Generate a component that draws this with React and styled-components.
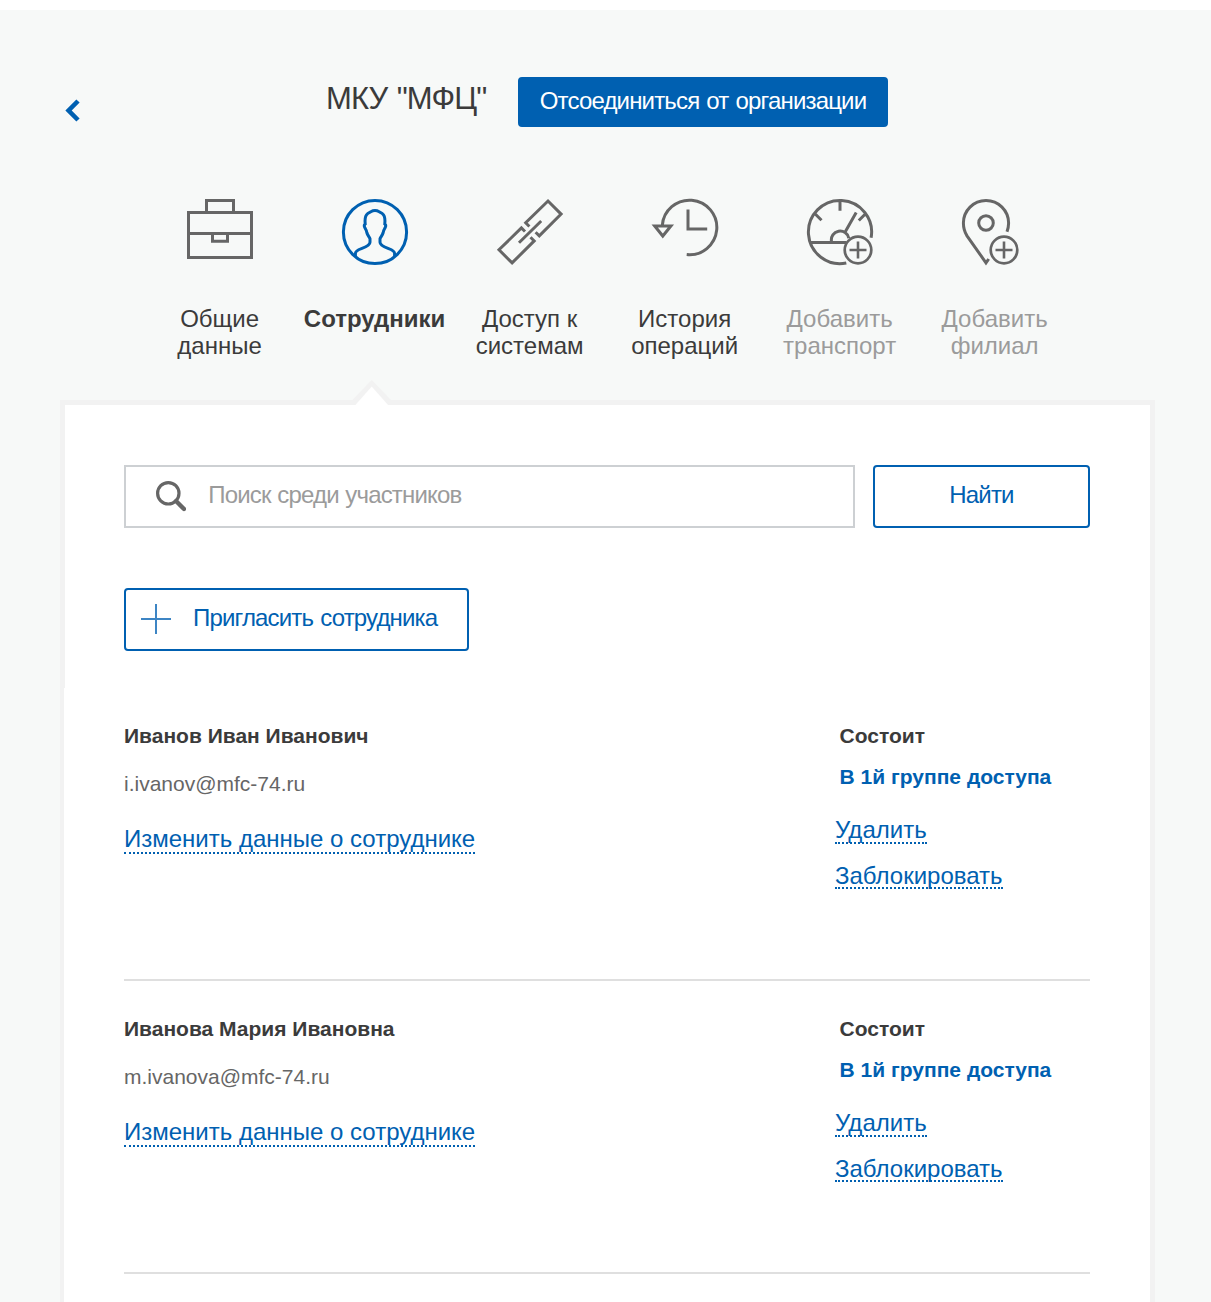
import React from "react";
import styled, { createGlobalStyle } from "styled-components";

const BLUE = "#0060b1";
const INK = "#3b3b3b";
const LINE = "#f2f2f2";

const GlobalStyle = createGlobalStyle`
  * { box-sizing: border-box; }
  body {
    margin: 0;
    background: #fff;
    color: ${INK};
    font-family: "Liberation Sans", Arial, sans-serif;
    font-size: 24px;
    overflow: hidden;
  }
`;

const Page = styled.main`
  width: 1211px;
  height: 1292px;
  margin-top: 10px;
  background: #f7f9f8;
  overflow: hidden;
`;

const Header = styled.header`
  display: flex;
  align-items: flex-start;
  height: 189px;
  padding: 67px 0 0 65px;
`;

const BackLink = styled.a`
  display: block;
  width: 15px;
  height: 23px;
  margin-top: 22px;
  svg { display: block; }
`;

const Title = styled.h1`
  width: 192px;
  margin: 3px 0 0 246px;
  font-size: 31px;
  font-weight: 400;
  line-height: 38px;
  letter-spacing: -0.85px;
  word-spacing: 1.5px;
  white-space: nowrap;
`;

const Button = styled.button`
  display: flex;
  align-items: center;
  justify-content: ${(p) => (p.$icon ? "flex-start" : "center")};
  gap: 22px;
  width: ${(p) => p.$width}px;
  height: ${(p) => (p.$primary ? 50 : 63)}px;
  padding: ${(p) => (p.$icon ? "0 0 0 15px" : "0")};
  border: 2px solid ${BLUE};
  border-radius: 4px;
  background: ${(p) => (p.$primary ? BLUE : "#fff")};
  color: ${(p) => (p.$primary ? "#fff" : BLUE)};
  font: inherit;
  letter-spacing: -0.83px;
  word-spacing: 1.2px;
  white-space: nowrap;
  svg { margin-bottom: 1px; }
`;

const ButtonLabel = styled.span`
  padding-bottom: ${(p) => p.$lift || 3}px;
  line-height: 27px;
`;

const Tabs = styled.nav`
  display: grid;
  grid-template-columns: repeat(6, 155px);
  height: 201px;
  padding-left: 142.5px;
`;

const Tab = styled.a`
  display: flex;
  flex-direction: column;
  align-items: center;
  gap: 40px;
  color: ${(p) => (p.$muted ? "#9b9b9b" : INK)};
  font-weight: ${(p) => (p.$active ? 700 : 400)};
  line-height: 27px;
  text-align: center;
`;

const TabIcon = styled.svg`
  display: block;
  width: 66px;
  height: 66px;
  fill: none;
  stroke: ${(p) => (p.$active ? BLUE : "#666")};
  stroke-width: 3;
  overflow: visible;
`;

const TabLabel = styled.span`
  padding-right: 0.8px;
  white-space: pre-line;
`;

const Panel = styled.section`
  position: relative;
  width: 1095px;
  height: 920px;
  margin-left: 60px;
  border: 5px solid ${LINE};
  background: #fff;
`;

const Pointer = styled.svg`
  position: absolute;
  left: 287px;
  top: -25px;
  width: 40px;
  height: 26px;
`;

const Tools = styled.div`
  display: flex;
  flex-direction: column;
  gap: 60px;
  height: 283px;
  padding: 60px 60px 0 59px;
`;

const SearchBar = styled.div`
  display: flex;
  gap: 18px;
`;

const SearchField = styled.label`
  display: flex;
  align-items: center;
  gap: 22px;
  width: 731px;
  height: 63px;
  padding-left: 29.7px;
  border: 2px solid #cdd0d3;
  background: #fff;
`;

const SearchInput = styled.input`
  flex: 1;
  min-width: 0;
  height: 27px;
  margin-bottom: 3px;
  padding: 0;
  border: 0;
  outline: 0;
  background: none;
  font: inherit;
  letter-spacing: -0.83px;
  word-spacing: 0.8px;
  &::placeholder { color: #9b9b9b; opacity: 1; }
`;

const People = styled.ul`
  height: 627px;
  margin: 0 0 0 -1px;
  padding: 0 60px;
  background: #fff;
  list-style: none;
`;

const Person = styled.li`
  display: flex;
  justify-content: space-between;
  height: 293px;
  padding-top: 36px;
  border-bottom: 2px solid #dfdfdf;
`;

const Column = styled.div`
  display: flex;
  flex-direction: column;
  align-items: flex-start;
  width: ${(p) => p.$width || "auto"};
`;

const Strong = styled.strong`
  font-size: 21px;
  line-height: 24px;
  color: ${(p) => (p.$accent ? BLUE : INK)};
  margin: ${(p) => p.$margin || 0};
  white-space: nowrap;
`;

const Email = styled.span`
  margin-top: 24px;
  font-size: 21px;
  line-height: 24px;
  color: #666;
`;

const TextLink = styled.a`
  margin-top: ${(p) => p.$top}px;
  border-bottom: 2px dotted ${BLUE};
  color: ${BLUE};
  line-height: ${(p) => p.$leading || 25}px;
  white-space: nowrap;
`;

const Plus = ({ x }) => (
  <>
    <circle cx={x} cy="51" r="13.3" strokeWidth="2.7" />
    <path d={`M${x - 8.5} 51h17M${x} 42.5v17`} strokeWidth="2.6" />
  </>
);

const icons = {
  briefcase: (
    <path d="M1.5 13.5h63v45h-63zM19.5 13.5v-12h27v12M1.5 34.5h63M25.5 34.5v7.8h15v-7.8" />
  ),
  user: (
    <>
      <circle cx="33" cy="33" r="31.6" />
      <path d="M13.4 57V54.3C13.7 51.5 17 50.5 20 49.4C25 47.5 28 46 28 43.2V39.8C27.3 37.8 25.5 36.2 24.8 33.5C24.4 31.4 24.1 30.8 22.9 28.8C22 27 22 25.8 23.2 25C22.8 21 22.9 18 24.5 15.8C26.2 13.4 27.8 13.5 28.8 12.8C30.5 11.8 31.5 11.6 33 11.6C34.5 11.6 35.5 11.8 37.2 12.8C38.2 13.5 39.8 13.4 41.5 15.8C43.1 18 43.2 21 42.8 25C44 25.8 44 27 43.1 28.8C41.9 30.8 41.6 31.4 41.2 33.5C40.5 36.2 38.7 37.8 38 39.8V43.2C38 46 41 47.5 46 49.4C49 50.5 52.3 51.5 52.6 54.3V57" />
    </>
  ),
  link: (
    <path d="M32.4 27.5L28.7 23.8L51 2L64.1 15.1L42.3 36.9L38.6 33.2M28 32.5L24.4 28.9L2 50.8L15.1 63.9L37.2 41.9L33.5 38.2M22 43.8L44.2 22" />
  ),
  history: (
    <path d="M10.3 26.5A27.3 27.3 0 1 1 34.7 55.6M2.7 27h16.2L10.8 37zM36 10.5V30H55.2" />
  ),
  gauge: (
    <>
      <path d="M64.1 38.7A31.6 31.6 0 1 0 39.3 64M4 43.4H39.5M24.5 42.5A8.8 8.8 0 0 1 41.8 39.2M38 33.2L49.2 13.6M33 1.5V11.8M8 14.8L14.5 21.3M58.3 15L51.8 21.5" />
      <Plus x={51} />
    </>
  ),
  pin: (
    <>
      <path d="M45 32.8C46 30 46.6 27 46.6 24C46.6 11.5 36.5 1.5 24 1.5S1.4 11.5 1.4 24C1.4 28.5 2.6 33 5 36.9L24 63.8L26.7 60" />
      <circle cx="24" cy="24" r="7.3" />
      <Plus x={42} />
    </>
  ),
};

const tabs = [
  { icon: "briefcase", label: "Общие\nданные" },
  { icon: "user", label: "Сотрудники", active: true },
  { icon: "link", label: "Доступ к\nсистемам" },
  { icon: "history", label: "История\nопераций" },
  { icon: "gauge", label: "Добавить\nтранспорт", muted: true },
  { icon: "pin", label: "Добавить\nфилиал", muted: true },
];

const people = [
  { name: "Иванов Иван Иванович", email: "i.ivanov@mfc-74.ru" },
  { name: "Иванова Мария Ивановна", email: "m.ivanova@mfc-74.ru" },
];

export default function App() {
  return (
    <>
      <GlobalStyle />
      <Page>
        <Header>
          <BackLink>
            <svg width="15" height="23" fill="none" stroke={BLUE} strokeWidth="4.6">
              <path d="M13 2L3.6 11.5L13 21" />
            </svg>
          </BackLink>
          <Title>МКУ "МФЦ"</Title>
          <Button $primary $width={370}>
            <ButtonLabel>Отсоединиться от организации</ButtonLabel>
          </Button>
        </Header>

        <Tabs>
          {tabs.map((t) => (
            <Tab key={t.icon} $active={t.active} $muted={t.muted}>
              <TabIcon viewBox="0 0 66 66" $active={t.active}>
                {icons[t.icon]}
              </TabIcon>
              <TabLabel>{t.label}</TabLabel>
            </Tab>
          ))}
        </Tabs>

        <Panel>
          <Pointer viewBox="0 0 40 26">
            <path d="M0 20.5L19.7 0L39.4 20.5V25H0z" fill={LINE} />
            <path d="M2.5 26L19.7 6.5L37 26z" fill="#fff" />
          </Pointer>
          <Tools>
            <SearchBar>
              <SearchField>
                <svg width="30.6" height="30.6" fill="none" stroke="#666">
                  <circle cx="12.3" cy="12.3" r="10.7" strokeWidth="3.2" />
                  <path d="M20 20L28 28" strokeWidth="4.4" strokeLinecap="round" />
                </svg>
                <SearchInput placeholder="Поиск среди участников" />
              </SearchField>
              <Button $width={217}>
                <ButtonLabel $lift={5}>Найти</ButtonLabel>
              </Button>
            </SearchBar>
            <Button $width={345} $icon>
              <svg width="30" height="30" stroke="#3d85c4" strokeWidth="2">
                <path d="M0 15h30M15 0v30" />
              </svg>
              <ButtonLabel $lift={5}>Пригласить сотрудника</ButtonLabel>
            </Button>
          </Tools>
          <People>
            {people.map((p) => (
              <Person key={p.email}>
                <Column>
                  <Strong>{p.name}</Strong>
                  <Email>{p.email}</Email>
                  <TextLink $top={29} $leading={27}>Изменить данные о сотруднике</TextLink>
                </Column>
                <Column $width="255px">
                  <Strong $margin="0 0 0 4.6px">Состоит</Strong>
                  <Strong $accent $margin="17px 0 0 4.6px">В 1й группе доступа</Strong>
                  <TextLink $top={28}>Удалить</TextLink>
                  <TextLink $top={20} $leading={23}>Заблокировать</TextLink>
                </Column>
              </Person>
            ))}
          </People>
        </Panel>
      </Page>
    </>
  );
}
